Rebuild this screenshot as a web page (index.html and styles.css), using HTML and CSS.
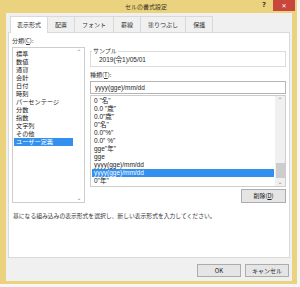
FILE: index.html
```html
<!DOCTYPE html>
<html lang="ja">
<head>
    <meta charset="UTF-8">
    <title>セルの書式設定</title>
    <link rel="stylesheet" href="styles.css">
</head>
<body>

<div class="frame">
    <!-- Title bar -->
    <div class="titlebar">
        <span class="title">セルの書式設定</span>
        <span class="help">?</span>
        <span class="close">✕</span>
    </div>

    <div class="client">
        <!-- Tabs -->
        <div class="tabs">
            <div class="tab active">表示形式</div>
            <div class="tab">配置</div>
            <div class="tab">フォント</div>
            <div class="tab">罫線</div>
            <div class="tab">塗りつぶし</div>
            <div class="tab">保護</div>
        </div>

        <div class="panel">
            <div class="columns">
                <div class="col-left">
                    <div class="label">分類(<u>C</u>):</div>
                    <div class="listbox categories">
                        <div class="items">
                            <div class="item">標準</div>
                            <div class="item">数値</div>
                            <div class="item">通貨</div>
                            <div class="item">会計</div>
                            <div class="item">日付</div>
                            <div class="item">時刻</div>
                            <div class="item">パーセンテージ</div>
                            <div class="item">分数</div>
                            <div class="item">指数</div>
                            <div class="item">文字列</div>
                            <div class="item">その他</div>
                            <div class="item selected">ユーザー定義</div>
                        </div>
                        <div class="scroll plain">
                            <span class="arrow">&#8963;</span>
                            <span class="arrow">&#8964;</span>
                        </div>
                    </div>
                </div>

                <div class="col-right">
                    <fieldset class="sample">
                        <legend>サンプル</legend>
                        <div class="sample-value">2019(令1)/05/01</div>
                    </fieldset>
                    <div class="label">種類(<u>T</u>):</div>
                    <div class="input">yyyy(gge)/mm/dd</div>
                    <div class="listbox formats">
                        <div class="items">
                            <div class="item">0 "名"</div>
                            <div class="item">0.0 "歳"</div>
                            <div class="item">0.0"歳"</div>
                            <div class="item">0"名"</div>
                            <div class="item">0.0"%"</div>
                            <div class="item">0.0" %"</div>
                            <div class="item">gge"年"</div>
                            <div class="item">gge</div>
                            <div class="item">yyyy(gge)/mm/dd</div>
                            <div class="item selected">yyyy(gge)/mm/dd</div>
                            <div class="item">0"年"</div>
                        </div>
                        <div class="scroll">
                            <span class="arrow">&#8963;</span>
                            <span class="thumb"></span>
                            <span class="arrow">&#8964;</span>
                        </div>
                    </div>
                    <div class="row-end">
                        <button class="btn">削除(<u>D</u>)</button>
                    </div>
                </div>
            </div>

            <p class="hint">基になる組み込みの表示形式を選択し、新しい表示形式を入力してください。</p>
        </div>

        <!-- Dialog buttons -->
        <div class="footer">
            <button class="btn wide">OK</button>
            <button class="btn wide">キャンセル</button>
        </div>
    </div>
</div>

</body>
</html>
```

FILE: styles.css
```css
body {
    margin: 0;
    background-color: #f6f6f6;
    font-family: "Noto Sans CJK JP", "Noto Sans", sans-serif;
    color: #1e1e1e;
}

.frame {
    width: 297px;
    height: 284px;
    box-sizing: border-box;
    background-color: #ead27e;
    padding: 0 5px 3px 6px;
    display: flex;
    flex-direction: column;
}

.titlebar {
    height: 13px;
    flex: none;
    position: relative;
    display: flex;
    justify-content: center;
    align-items: center;
}

.title {
    font-size: 6px;
    line-height: 8px;
    color: #3a3420;
    margin-right: 6px;
}

.help {
    position: absolute;
    right: 26px;
    top: 1px;
    font-family: "DejaVu Sans", sans-serif;
    font-size: 7px;
    font-weight: bold;
    color: #4a4228;
}

.close {
    position: absolute;
    right: -3px;
    top: 0;
    width: 22px;
    height: 11px;
    background-color: #c8463c;
    color: #fff;
    font-family: "DejaVu Sans", sans-serif;
    font-size: 6px;
    line-height: 11px;
    text-align: center;
}

.client {
    flex: 1;
    background-color: #f0f0f0;
    padding: 2px 2px 0 2px;
    display: flex;
    flex-direction: column;
}

.tabs {
    display: flex;
    padding-left: 2px;
    height: 17px;
    align-items: flex-end;
}

.tab {
    height: 16px;
    box-sizing: border-box;
    padding: 0 7px;
    font-size: 6px;
    line-height: 15px;
    border: 1px solid #d9d9d9;
    border-bottom: none;
    border-left: none;
    background-color: #f0f0f0;
    color: #333;
}

.tab.active {
    height: 17px;
    background-color: #fff;
    border-left: 1px solid #d9d9d9;
    margin-bottom: -1px;
    position: relative;
    padding: 0 6px;
}

.panel {
    background-color: #fff;
    border: 1px solid #d9d9d9;
    height: 226px;
    box-sizing: border-box;
    padding: 3px 3px 0 3px;
}

.columns {
    display: flex;
    gap: 5px;
}

.col-left {
    width: 73px;
    flex: none;
}

.col-right {
    flex: 1;
    padding-top: 12px;
}

.label {
    font-size: 6px;
    line-height: 9px;
    height: 11px;
    color: #333;
}

.label u {
    text-decoration: underline;
}

.listbox {
    border: 1px solid #cdcdcd;
    display: flex;
    box-sizing: border-box;
    background-color: #fff;
}

.categories {
    height: 156px;
}

.formats {
    height: 92px;
}

.items {
    flex: 1;
    padding: 2px 1px;
    min-width: 0;
}

.formats .items {
    padding-top: 1px;
}

.item {
    height: 8px;
    font-size: 6.2px;
    line-height: 8px;
    padding-left: 2px;
    white-space: nowrap;
    overflow: hidden;
    color: #222;
}

.formats .item {
    font-family: "Liberation Sans", "Noto Sans CJK JP", sans-serif;
    font-size: 6.5px;
}

.item.selected {
    background-color: #3390ee;
    color: #fff;
}

.scroll {
    width: 10px;
    flex: none;
    display: flex;
    flex-direction: column;
    justify-content: space-between;
    align-items: center;
    background-color: #f0f0f0;
}

.scroll.plain {
    background-color: #fff;
}

.arrow {
    font-family: "DejaVu Sans", sans-serif;
    font-size: 6px;
    line-height: 8px;
    color: #8a8a8a;
}

.thumb {
    width: 9px;
    height: 15px;
    background-color: #cdcdcd;
    margin-top: auto;
}

.sample {
    margin: 0 0 3px 0;
    padding: 2px 8px 3px 8px;
    border: 1px solid #dcdcdc;
    height: 19px;
    box-sizing: border-box;
}

.sample legend {
    font-size: 6px;
    line-height: 6px;
    padding: 0 1px;
    margin-left: -7px;
    color: #333;
}

.sample-value {
    font-family: "Liberation Sans", "Noto Sans CJK JP", sans-serif;
    font-size: 6.5px;
    line-height: 8px;
}

.input {
    border: 1px solid #b5b5b5;
    height: 13px;
    box-sizing: border-box;
    padding-left: 4px;
    font-family: "Liberation Sans", sans-serif;
    font-size: 6.5px;
    line-height: 11px;
    margin-bottom: 1px;
}

.row-end {
    display: flex;
    justify-content: flex-end;
    margin-top: 2px;
}

.btn {
    height: 14px;
    width: 45px;
    padding: 0;
    border: 1px solid #acacac;
    background-color: #e5e5e5;
    font-family: "Noto Sans CJK JP", "Liberation Sans", sans-serif;
    font-size: 6px;
    line-height: 12px;
    color: #222;
}

.hint {
    margin: 9px 0 0 1px;
    font-size: 5.8px;
    line-height: 8px;
    color: #333;
    white-space: nowrap;
}

.footer {
    display: flex;
    justify-content: flex-end;
    gap: 4px;
    padding: 6px 1px 0 0;
}

.btn.wide {
    width: 44px;
    height: 13px;
}
```
